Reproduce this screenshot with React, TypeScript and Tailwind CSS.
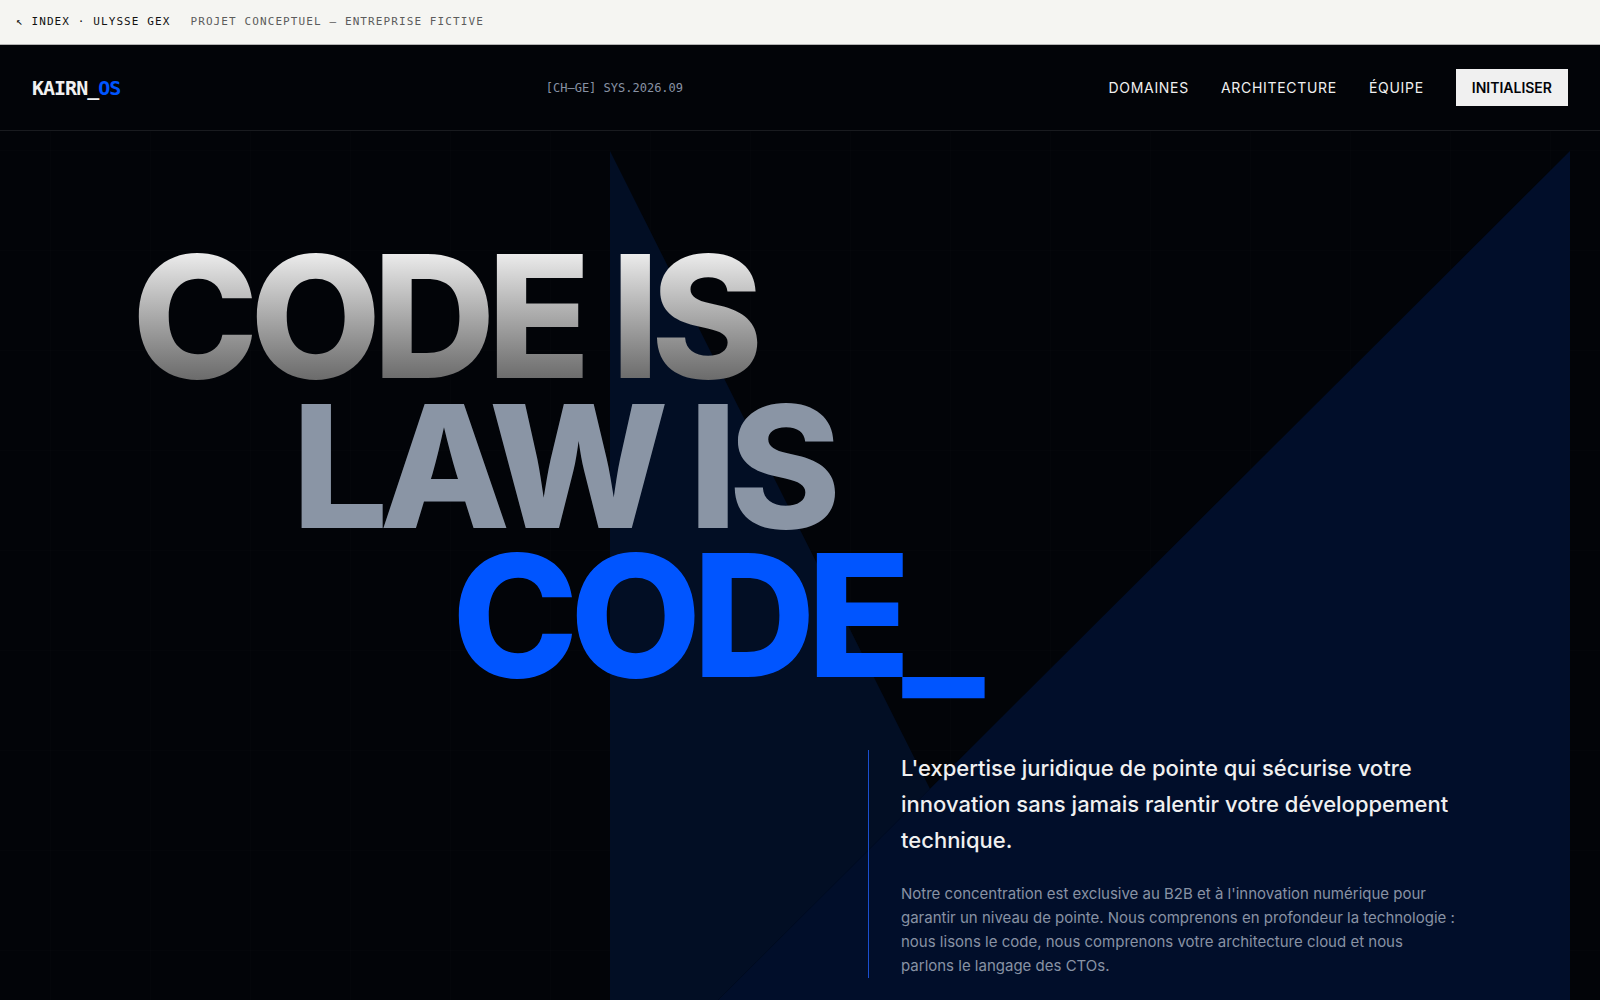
import { clsx } from 'clsx';

const NAV_LINKS = [
    { label: 'DOMAINES', href: '#domaines' },
    { label: 'ARCHITECTURE', href: '#architecture' },
    { label: 'ÉQUIPE', href: '#equipe' },
];

const HEADLINE = [
    { text: 'CODE IS', className: 'bg-linear-to-b from-[#f8f8f8] to-[#606060] bg-clip-text text-transparent' },
    { text: 'LAW IS', className: 'ml-[10vw] text-[#8a95a5]' },
    { text: 'CODE_', className: 'ml-[20vw] text-[#0055ff]' },
];

function TopBar() {
    return (
        <div className="flex h-[45px] items-center gap-5 border-b border-[#b4b4b4] bg-[#f5f5f2] px-4 font-['DejaVu_Sans_Mono',monospace] text-[11px] tracking-widest">
            <a href="#index" className="text-[#111111]">
                ↖ INDEX · ULYSSE GEX
            </a>
            <span className="text-[#5c5c5c]">PROJET CONCEPTUEL — ENTREPRISE FICTIVE</span>
        </div>
    );
}

function Header() {
    return (
        <header className="flex items-center justify-between border-b border-[#191b1f] bg-[#020408] px-8 py-6">
            <a
                href="#top"
                className="font-['DejaVu_Sans_Mono',monospace] text-xl font-bold tracking-tighter text-[#f0f0f0]"
            >
                KAIRN_<span className="text-[#0055ff]">OS</span>
            </a>
            <span className="font-['DejaVu_Sans_Mono',monospace] text-xs text-[#8892a4]">[CH–GE] SYS.2026.09</span>
            <nav className="flex items-center gap-8 text-sm leading-[21px] tracking-wider text-[#f0f0f0]">
                {NAV_LINKS.map((link) => (
                    <a key={link.href} href={link.href}>
                        {link.label}
                    </a>
                ))}
                <button type="button" className="bg-[#f0f0f0] px-4 py-2 font-semibold tracking-normal text-[#020408]">
                    INITIALISER
                </button>
            </nav>
        </header>
    );
}

function Facets() {
    return (
        <svg
            aria-hidden="true"
            viewBox="0 0 960 869"
            preserveAspectRatio="none"
            className="absolute top-5 right-[30px] h-full w-3/5"
        >
            <polygon points="0,0 320,638 88,869 0,869" fill="#020e24" />
            <polygon points="960,0 960,869 88,869" fill="#010e2a" />
        </svg>
    );
}

export default function App() {
    return (
        <div
            id="top"
            className="flex min-h-screen flex-col bg-[#020408] bg-[linear-gradient(to_right,rgba(255,255,255,0.008)_1px,transparent_1px),linear-gradient(to_bottom,rgba(255,255,255,0.008)_1px,transparent_1px)] bg-[size:100px_100px] bg-center font-['Inter',sans-serif]"
        >
            <TopBar />
            <Header />
            <main className="relative grow overflow-hidden px-[132px] pt-[111px] pb-[21px]">
                <Facets />
                <div className="relative">
                    <h1 className="text-[170px] leading-[0.88] font-extrabold tracking-tighter whitespace-nowrap">
                        {HEADLINE.map((line) => (
                            <span key={line.text} className={clsx('block', line.className)}>
                                {line.text}
                            </span>
                        ))}
                    </h1>
                    <div className="mt-[59px] ml-auto max-w-[600px] border-l border-[#1a4fd0] pl-8">
                        <p className="mb-6 text-[22px] leading-9 font-medium text-[#f0f0f0]">
                            L'expertise juridique de pointe qui sécurise votre innovation sans jamais ralentir votre
                            développement technique.
                        </p>
                        <p className="text-[15px] leading-6 text-[#8892a4]">
                            Notre concentration est exclusive au B2B et à l'innovation numérique pour garantir un niveau
                            de pointe. Nous comprenons en profondeur la technologie : nous lisons le code, nous
                            comprenons votre architecture cloud et nous parlons&nbsp;le langage des CTOs.
                        </p>
                    </div>
                </div>
            </main>
        </div>
    );
}
